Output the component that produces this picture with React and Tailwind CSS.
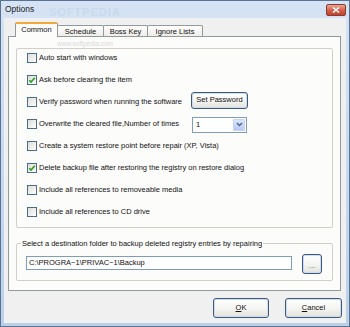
import React from "react";

function CheckBox({ checked }) {
  return (
    <div className="w-[10px] h-[10px] shrink-0 border border-[#4a6c90] bg-gradient-to-br from-[#dcdcd7] to-white flex items-center justify-center">
      {checked && (
        <svg width="8" height="8" viewBox="0 0 8 8">
          <path d="M1.2 4.2 L3 6 L6.8 1.8" fill="none" stroke="#21a121" strokeWidth="1.6" />
        </svg>
      )}
    </div>
  );
}

function Row({ checked, label, labelW, children }) {
  return (
    <div className="h-[22px] flex items-center pl-[10px]">
      <CheckBox checked={checked} />
      <div className={`ml-[2px] whitespace-nowrap ${labelW || ""}`}>{label}</div>
      {children}
    </div>
  );
}

function XPButton({ className, children }) {
  return (
    <div
      className={`rounded-[3px] border border-[#3d5a7e] bg-gradient-to-b from-white via-[#f5f5f2] to-[#e3e2dc] shadow-[inset_0_0_0_1px_#cfdcf0] flex items-center justify-center ${className}`}
    >
      {children}
    </div>
  );
}

export default function App() {
  return (
    <div className="w-[350px] h-[327px] flex flex-col bg-gradient-to-b from-[#d6e3f4] to-[#bcd0ea] border border-[#5b7392] font-['Liberation_Sans',Arial,sans-serif] text-[7.5px] leading-none text-[#111] overflow-hidden">
      {/* Title bar */}
      <div className="h-[17px] flex items-center justify-between pl-[4px] pr-[3px] relative">
        <span className="text-[8.5px] text-[#1b1b1b]">Options</span>
        <div className="w-[20px] h-[12px] rounded-[2px] border border-[#8b3a2e] bg-gradient-to-b from-[#eba696] via-[#d2624c] to-[#bf432f] flex items-center justify-center">
          <svg width="8" height="6" viewBox="0 0 8 6">
            <path d="M1 0.5 L7 5.5 M7 0.5 L1 5.5" stroke="white" strokeWidth="1.5" />
          </svg>
        </div>
        <span className="absolute left-[48px] top-[6px] text-[11px] font-bold tracking-[1px] text-[#9fb2c8] opacity-20">SOFTPEDIA</span>
      </div>

      {/* Client */}
      <div className="flex-1 mx-[3px] mb-[3px] bg-[#f0f0f0] flex flex-col">
        {/* Tab strip */}
        <div className="mt-[4px] h-[15px] pl-[11px] flex items-end">
          <div className="relative z-10 w-[43px] h-[15px] bg-[#fcfcfb] border-x border-[#919b9c] border-t-2 border-t-[#f1a93c] rounded-t-[2px] flex items-center justify-center pb-[1px]">
            Common
          </div>
          <div className="w-[47px] h-[12px] -ml-px bg-gradient-to-b from-white to-[#ecebe6] border-x border-t border-[#919b9c] rounded-t-[2px] flex items-center justify-center">
            Schedule
          </div>
          <div className="w-[45px] h-[12px] -ml-px bg-gradient-to-b from-white to-[#ecebe6] border-x border-t border-[#919b9c] rounded-t-[2px] flex items-center justify-center">
            Boss Key
          </div>
          <div className="w-[56px] h-[12px] -ml-px bg-gradient-to-b from-white to-[#ecebe6] border-x border-t border-[#919b9c] rounded-t-[2px] flex items-center justify-center">
            Ignore Lists
          </div>
        </div>

        {/* Tab page */}
        <div className="relative -mt-px ml-[4px] w-[333px] h-[255px] border border-[#919b9c] bg-[#fcfcfb] flex flex-col">
          <span className="absolute left-[48px] top-[4px] text-[6.5px] text-[#dadada]">www.softpedia.com</span>

          {/* Options group */}
          <div className="mt-[11px] ml-[7px] w-[317px] h-[180px] border border-[#d0d0c8] rounded-[2px] flex flex-col">
            <div className="-mt-[2px] flex flex-col">
              <Row label="Auto start with windows" />
              <Row checked label="Ask before clearing the item" />
              <Row label="Verify password when running the software" labelW="w-[152px]">
                <XPButton className="w-[57px] h-[17px] -mt-[4px]">Set Password</XPButton>
              </Row>
              <Row label="Overwrite the cleared file,Number of times" labelW="w-[153px]">
                <div className="w-[55px] h-[16px] mt-[1px] border border-[#7f9db9] bg-white flex items-center">
                  <span className="flex-1 pl-[3px]">1</span>
                  <div className="w-[12px] h-[12px] mr-px rounded-[1px] bg-gradient-to-b from-[#dbe6fd] to-[#b7c9f4] border border-[#c3d3fd] flex items-center justify-center">
                    <svg width="7" height="5" viewBox="0 0 7 5">
                      <path d="M1 1 L3.5 3.5 L6 1" fill="none" stroke="#4d6185" strokeWidth="1.4" />
                    </svg>
                  </div>
                </div>
              </Row>
              <Row label="Create a system restore point before repair (XP, Vista)" />
              <Row checked label="Delete backup file after restoring the registry on restore dialog" />
              <Row label="Include all references to removeable media" />
              <Row label="Include all references to CD drive" />
            </div>
          </div>

          {/* Backup folder group */}
          <div className="relative mt-[15px] ml-[7px] w-[317px] h-[38px] border border-[#d0d0c8] rounded-[2px] flex items-center pl-[9px]">
            <span className="absolute left-[4px] -top-[4px] bg-[#fcfcfb] px-[1px]">
              Select a destination folder to backup deleted registry entries by repairing
            </span>
            <div className="w-[266px] h-[14px] mt-[2px] border border-[#7f9db9] bg-white flex items-center pl-[2px]">
              {"C:\\PROGRA~1\\PRIVAC~1\\Backup"}
            </div>
            <XPButton className="ml-[10px] w-[20px] h-[20px] mt-[4px] items-end pb-[4px] text-[#666]">...</XPButton>
          </div>
        </div>

        {/* Dialog buttons */}
        <div className="mt-[7px] h-[20px] flex justify-end gap-[16px] pr-[4px]">
          <XPButton className="w-[56px] h-[20px]">
            <span><u>O</u>K</span>
          </XPButton>
          <XPButton className="w-[57px] h-[20px]">
            <span><u>C</u>ancel</span>
          </XPButton>
        </div>
      </div>
    </div>
  );
}
